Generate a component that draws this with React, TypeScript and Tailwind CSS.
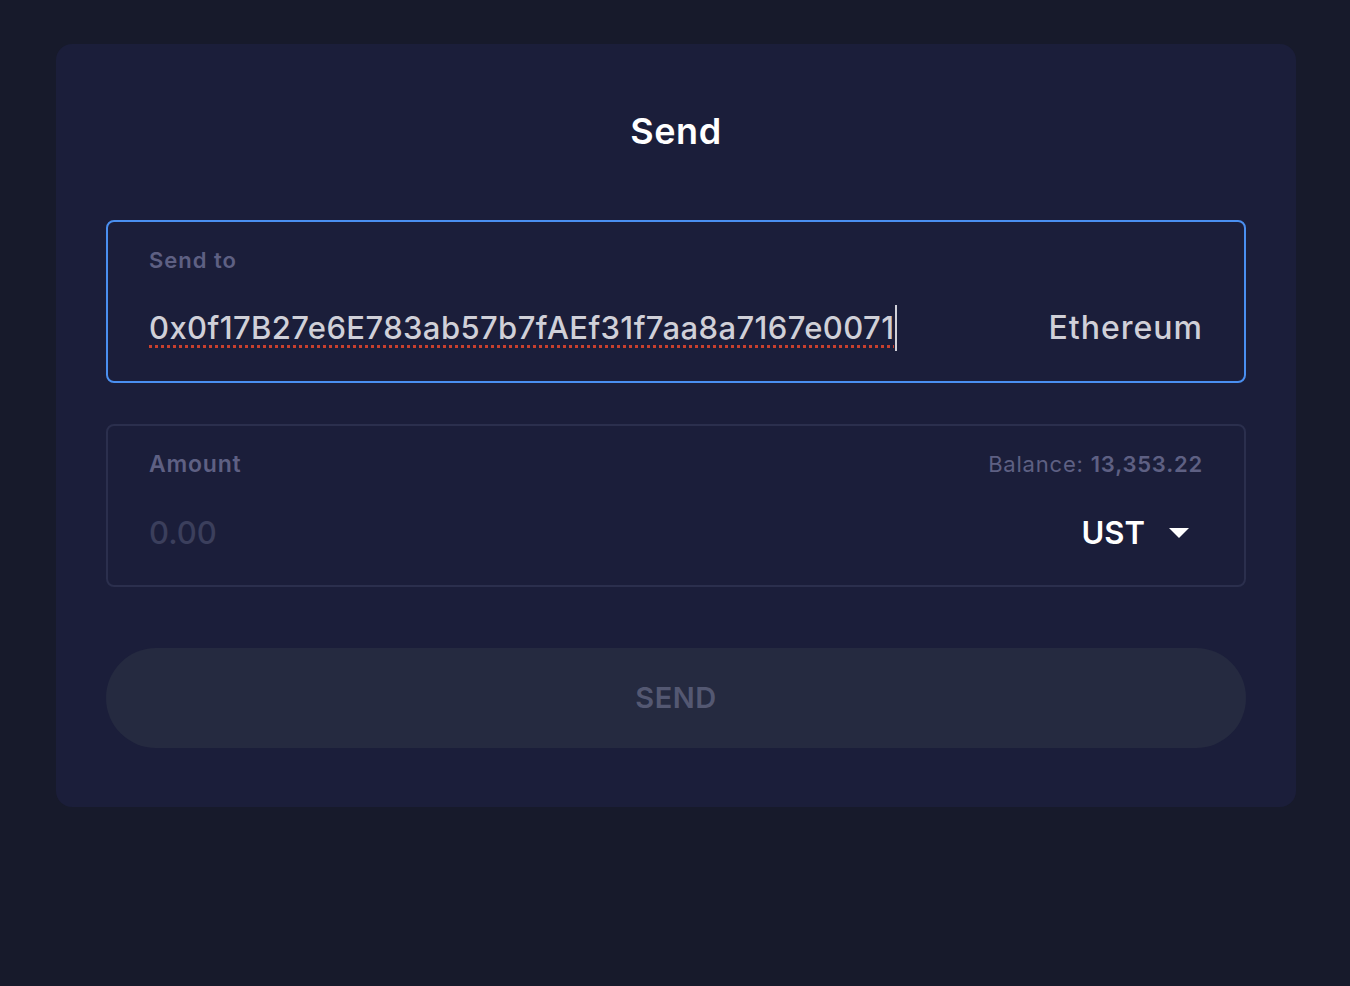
import React from "react";

export default function App() {
  return (
    <div
      className="min-h-[986px] w-full bg-[#171a2b] px-[56px] pt-[44px]"
      style={{ fontFamily: "Inter, 'Noto Sans', sans-serif" }}
    >
      <div className="flex h-[763px] w-[1240px] flex-col rounded-[16px] bg-[#1b1e3a] px-[50px]">
        <h1 className="mt-[67px] text-center text-[36px] font-semibold leading-[40px] tracking-[0.6px] text-white">
          Send
        </h1>

        <div className="mt-[69px] flex h-[163px] flex-col rounded-[8px] border-2 border-[#4a8ff0] px-[41px]">
          <div className="mt-[24px] text-[22px] font-semibold leading-[28px] tracking-[1px] text-[#5e6083]">
            Send to
          </div>
          <div className="mt-[31px] flex items-center justify-between">
            <div className="flex items-center">
              <span className="text-[31px] font-medium leading-[40px] tracking-[0.4px] text-[#d0d0d8] underline decoration-dotted decoration-[#c8402e] decoration-[3px] underline-offset-[6px]">
                0x0f17B27e6E783ab57b7fAEf31f7aa8a7167e0071
              </span>
              <span className="ml-[1px] h-[46px] w-[2px] bg-[#d0d0d8]" />
            </div>
            <span className="text-[32px] font-medium leading-[40px] tracking-[1px] text-[#d0d0d8]">
              Ethereum
            </span>
          </div>
        </div>

        <div className="mt-[41px] flex h-[163px] flex-col rounded-[8px] border-2 border-[#2b2f4d] px-[41px]">
          <div className="mt-[24px] flex items-center justify-between">
            <span className="text-[23px] font-semibold leading-[28px] tracking-[0.8px] text-[#5e6083]">
              Amount
            </span>
            <span className="text-[22px] leading-[28px] tracking-[0.8px] text-[#5e6083]">
              Balance: <span className="font-semibold">13,353.22</span>
            </span>
          </div>
          <div className="mt-[35px] flex items-center justify-between">
            <span className="text-[31px] font-medium leading-[40px] text-[#3b3f5c]">
              0.00
            </span>
            <div className="mr-[14px] flex items-center">
              <span className="text-[31px] font-semibold leading-[40px] text-white">
                UST
              </span>
              <svg className="ml-[24px]" width="20" height="12" viewBox="0 0 20 12">
                <path d="M0 1 L20 1 L10 11 Z" fill="#ffffff" />
              </svg>
            </div>
          </div>
        </div>

        <button className="mt-[61px] flex h-[100px] w-full items-center justify-center rounded-full bg-[#252a40] text-[29px] font-semibold tracking-[0.5px] text-[#545872]">
          SEND
        </button>
      </div>
    </div>
  );
}
